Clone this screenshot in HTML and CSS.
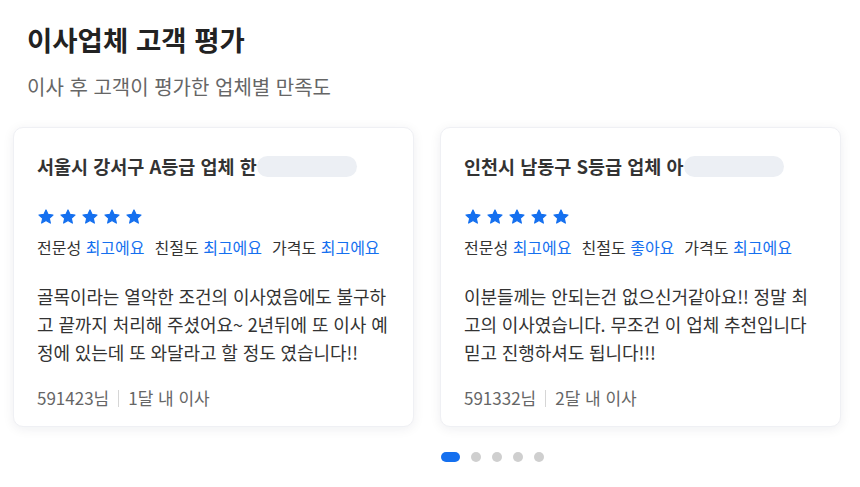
FILE: index.html
```html
<!DOCTYPE html>
<html lang="ko">
<head>
<meta charset="utf-8">
<link rel="stylesheet" href="styles.css">
</head>
<body>
<section class="reviews">
  <header class="head">
    <h1 class="title">이사업체 고객 평가</h1>
    <p class="sub">이사 후 고객이 평가한 업체별 만족도</p>
  </header>
  <div class="track">
    <article class="card">
      <h2 class="card-title">서울시 강서구 A등급 업체 한<span class="mask"></span></h2>
      <div class="stars">
        <svg viewBox="0 0 24 24"><path d="M12 2.6l2.8 6 6.5.7-4.9 4.4 1.4 6.4L12 16.8l-5.8 3.3 1.4-6.4L2.7 9.3l6.5-.7z"/></svg>
        <svg viewBox="0 0 24 24"><path d="M12 2.6l2.8 6 6.5.7-4.9 4.4 1.4 6.4L12 16.8l-5.8 3.3 1.4-6.4L2.7 9.3l6.5-.7z"/></svg>
        <svg viewBox="0 0 24 24"><path d="M12 2.6l2.8 6 6.5.7-4.9 4.4 1.4 6.4L12 16.8l-5.8 3.3 1.4-6.4L2.7 9.3l6.5-.7z"/></svg>
        <svg viewBox="0 0 24 24"><path d="M12 2.6l2.8 6 6.5.7-4.9 4.4 1.4 6.4L12 16.8l-5.8 3.3 1.4-6.4L2.7 9.3l6.5-.7z"/></svg>
        <svg viewBox="0 0 24 24"><path d="M12 2.6l2.8 6 6.5.7-4.9 4.4 1.4 6.4L12 16.8l-5.8 3.3 1.4-6.4L2.7 9.3l6.5-.7z"/></svg>
      </div>
      <div class="scores">
        <span>전문성 <b>최고에요</b></span>
        <span>친절도 <b>최고에요</b></span>
        <span>가격도 <b>최고에요</b></span>
      </div>
      <p class="body">골목이라는 열악한 조건의 이사였음에도 불구하고 끝까지 처리해 주셨어요~ 2년뒤에 또 이사 예정에 있는데 또 와달라고 할 정도 였습니다!!</p>
      <div class="meta"><span>591423님</span><i class="sep"></i><span>1달 내 이사</span></div>
    </article>
    <article class="card">
      <h2 class="card-title">인천시 남동구 S등급 업체 아<span class="mask"></span></h2>
      <div class="stars">
        <svg viewBox="0 0 24 24"><path d="M12 2.6l2.8 6 6.5.7-4.9 4.4 1.4 6.4L12 16.8l-5.8 3.3 1.4-6.4L2.7 9.3l6.5-.7z"/></svg>
        <svg viewBox="0 0 24 24"><path d="M12 2.6l2.8 6 6.5.7-4.9 4.4 1.4 6.4L12 16.8l-5.8 3.3 1.4-6.4L2.7 9.3l6.5-.7z"/></svg>
        <svg viewBox="0 0 24 24"><path d="M12 2.6l2.8 6 6.5.7-4.9 4.4 1.4 6.4L12 16.8l-5.8 3.3 1.4-6.4L2.7 9.3l6.5-.7z"/></svg>
        <svg viewBox="0 0 24 24"><path d="M12 2.6l2.8 6 6.5.7-4.9 4.4 1.4 6.4L12 16.8l-5.8 3.3 1.4-6.4L2.7 9.3l6.5-.7z"/></svg>
        <svg viewBox="0 0 24 24"><path d="M12 2.6l2.8 6 6.5.7-4.9 4.4 1.4 6.4L12 16.8l-5.8 3.3 1.4-6.4L2.7 9.3l6.5-.7z"/></svg>
      </div>
      <div class="scores">
        <span>전문성 <b>최고에요</b></span>
        <span>친절도 <b>좋아요</b></span>
        <span>가격도 <b>최고에요</b></span>
      </div>
      <p class="body">이분들께는 안되는건 없으신거같아요!! 정말 최고의 이사였습니다. 무조건 이 업체 추천입니다 믿고 진행하셔도 됩니다!!!</p>
      <div class="meta"><span>591332님</span><i class="sep"></i><span>2달 내 이사</span></div>
    </article>
  </div>
  <div class="dots">
    <span class="dot active"></span>
    <span class="dot"></span>
    <span class="dot"></span>
    <span class="dot"></span>
    <span class="dot"></span>
  </div>
</section>
</body>
</html>
```

FILE: styles.css
```css
* { box-sizing: border-box; }
html, body {
  margin: 0;
  padding: 0;
  background: #fff;
}
body {
  font-family: "Noto Sans CJK KR", "Noto Sans", sans-serif;
  color: #333;
  width: 860px;
  height: 487px;
  overflow: hidden;
}
.reviews {
  overflow: hidden;
}
.head {
  padding: 21px 27px 0;
}
.title {
  margin: 0;
  font-size: 27.5px;
  line-height: 36px;
  font-weight: 700;
  color: #222;
}
.sub {
  margin: 17px 0 0;
  font-size: 20px;
  line-height: 26px;
  color: #666;
}
.track {
  display: flex;
  gap: 26px;
  padding: 27px 13px 0;
  width: max-content;
}
.card {
  width: 401px;
  height: 300px;
  flex: none;
  background: #fff;
  border: 1px solid #eff0f4;
  border-radius: 10px;
  box-shadow: 0 2px 12px rgba(20, 30, 60, 0.07);
  padding: 25px 19px 0 23px;
  display: flex;
  flex-direction: column;
}
.card-title {
  margin: 0;
  font-size: 18.5px;
  line-height: 26px;
  font-weight: 700;
  color: #333;
  display: flex;
  align-items: center;
  white-space: nowrap;
}
.mask {
  display: inline-block;
  width: 100px;
  height: 21px;
  border-radius: 11px;
  background: #eceff4;
}
.stars {
  display: flex;
  gap: 4px;
  margin-top: 29px;
}
.stars svg {
  width: 18px;
  height: 18px;
  fill: #1570ef;
  stroke: #1570ef;
  stroke-width: 1.6;
  stroke-linejoin: round;
}
.scores {
  display: flex;
  gap: 10px;
  margin-top: 10px;
  font-size: 16px;
  line-height: 22px;
  color: #333;
}
.scores b {
  font-weight: 400;
  color: #1570ef;
}
.body {
  margin: 24px 0 0;
  font-size: 18px;
  line-height: 28px;
  letter-spacing: -0.1px;
  color: #333;
}
.meta {
  margin-top: auto;
  margin-bottom: 16px;
  display: flex;
  align-items: center;
  font-size: 17px;
  line-height: 24px;
  color: #666;
}
.sep {
  display: inline-block;
  width: 1px;
  height: 17px;
  background: #d6d6d6;
  margin: 0 9px;
}
.dots {
  display: flex;
  gap: 11px;
  align-items: center;
  padding-left: 441px;
  margin-top: 25px;
}
.dot {
  width: 10px;
  height: 10px;
  border-radius: 5px;
  background: #cfcfcf;
}
.dot.active {
  width: 19px;
  background: #1570ef;
}
```
